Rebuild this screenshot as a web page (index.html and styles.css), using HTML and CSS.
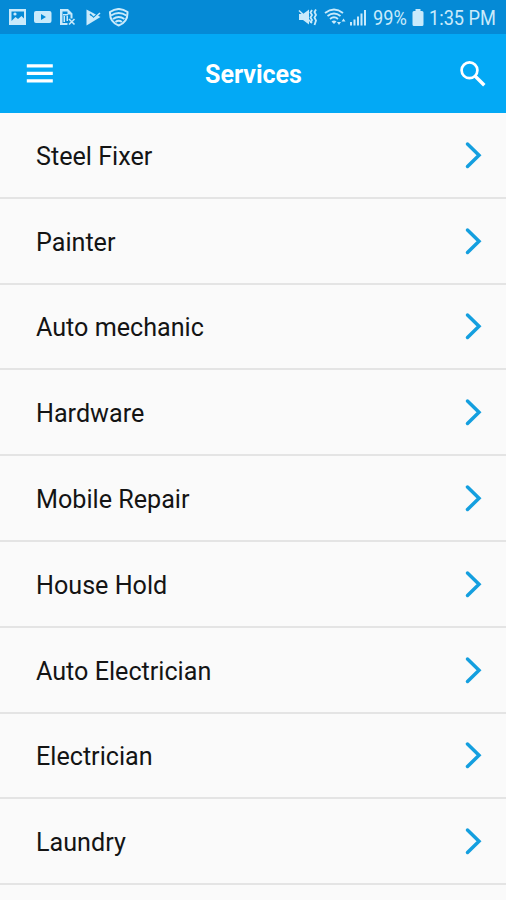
FILE: index.html
```html
<!DOCTYPE html>
<html lang="en">
<head>
    <meta charset="UTF-8">
    <meta name="viewport" content="width=device-width, initial-scale=1.0">
    <title>Services</title>
    <link rel="stylesheet" href="styles.css">
</head>
<body>
    <div class="status-bar">
        <svg class="status-left" width="124" height="20" viewBox="0 0 124 20" fill="currentColor">
            <!-- picture -->
            <path fill-rule="evenodd" d="M1 1h17v16H1zM3.500 3.500v9.500l4-4 2.500 2 3.500-3 2.500 2.500V3.500z"/>
            <circle cx="7" cy="6" r="1.600"/>
            <!-- video -->
            <path fill-rule="evenodd" d="M28 3h13.500q2 0 2 2v8q0 2-2 2H28q-2 0-2-2V5q0-2 2-2zM33 6v6l5-3z"/>
            <!-- document -->
            <path fill-rule="evenodd" d="M52 1h8l4.500 4.500v5h-2V6.500h-3V3.500h-5v11.500h5v2h-7.500z"/>
            <path d="M55 6h5v1.500h-5zM55.500 8H57v6h-1.500zM58.500 8H60v5h-1.500z"/>
            <path d="M61 11l5.500 5.500M66.500 11l-5.500 5.500" fill="none" stroke="currentColor" stroke-width="1.600"/>
            <!-- play check -->
            <path d="M78.500 1.500l14 7.500-14 8.500z"/>
            <path d="M82 6l3.500 3.500L93 3" fill="none" stroke="#058ad6" stroke-width="1.500"/>
            <path d="M83 8.500l2.500 2.500 6.500-6" fill="none" stroke="currentColor" stroke-width="1.600"/>
            <!-- secured wifi -->
            <path d="M102 4Q110.700-2 119.500 4Q120 14 110.700 17.500Q101.500 14 102 4z" fill="none" stroke="currentColor" stroke-width="2"/>
            <path d="M103 7.500q7.700-5 15.400 0M105 11q5.700-4 11.400 0M107.500 14q3.200-2.500 6.400 0" fill="none" stroke="currentColor" stroke-width="2"/>
        </svg>
        <div class="status-right">
            <svg width="72" height="20" viewBox="0 0 72 20" fill="currentColor">
                <!-- muted, vibrate -->
                <path d="M1 6h4l6-4.500v15L5 12H1z"/>
                <path d="M1 2.500l13 12.500" fill="none" stroke="currentColor" stroke-width="1.600"/>
                <path d="M14 2l-1.500 2.500L14 7l-1.500 2.500L14 12l-1.500 3M18 1.500l-1.500 2.500L18 7l-1.500 2.500L18 12.500 16.500 17" fill="none" stroke="currentColor" stroke-width="1.800"/>
                <!-- wifi -->
                <path d="M27 5q9-7 18 0M29.500 8q6.500-5 13 0M32 11q4-3.500 8 0" fill="none" stroke="currentColor" stroke-width="1.800"/>
                <path d="M33.500 13.500q2.500-2 5 0L36 16z"/>
                <path d="M39 14h4l-2 3zM43.500 13.500h4l-2-3z"/>
                <!-- signal -->
                <path d="M52 14h2v3.500h-2zM55.500 11.500h2v6h-2zM59 8.500h2v9h-2zM62.500 5.500h2v12h-2zM66 2h2v15.500h-2z"/>
            </svg>
            <span class="percent">99%</span>
            <svg class="battery" width="12" height="18" viewBox="0 0 12 18" fill="currentColor">
                <path d="M3.500 0h5v2H10q1.500 0 1.500 1.500v12Q11.500 17 10 17H2Q.5 17 .5 15.500v-12Q.5 2 2 2h1.500z"/>
            </svg>
            <span class="clock">1:35 PM</span>
        </div>
    </div>
    <header class="header">
        <svg class="menu-icon" width="28" height="20" viewBox="0 0 28 20" fill="currentColor">
            <path d="M.8 .2h26v3.300h-26zM.8 7.700h26V11h-26zM.8 15.200h26v3.300h-26z"/>
        </svg>
        <h1>Services</h1>
        <svg class="search-icon" width="26" height="26" viewBox="0 0 26 26" fill="none" stroke="currentColor">
            <circle cx="9.500" cy="9.300" r="7.900" stroke-width="2.700"/>
            <path d="M15 15l9.300 9.300" stroke-width="3.400"/>
        </svg>
    </header>
    <ul class="services">
        <li><span>Steel Fixer</span><svg class="arrow" viewBox="0 0 17 28"><path d="M2.500 3L14 14.300 2.500 25.500"/></svg></li>
        <li><span>Painter</span><svg class="arrow" viewBox="0 0 17 28"><path d="M2.500 3L14 14.300 2.500 25.500"/></svg></li>
        <li><span>Auto mechanic</span><svg class="arrow" viewBox="0 0 17 28"><path d="M2.500 3L14 14.300 2.500 25.500"/></svg></li>
        <li><span>Hardware</span><svg class="arrow" viewBox="0 0 17 28"><path d="M2.500 3L14 14.300 2.500 25.500"/></svg></li>
        <li><span>Mobile Repair</span><svg class="arrow" viewBox="0 0 17 28"><path d="M2.500 3L14 14.300 2.500 25.500"/></svg></li>
        <li><span>House Hold</span><svg class="arrow" viewBox="0 0 17 28"><path d="M2.500 3L14 14.300 2.500 25.500"/></svg></li>
        <li><span>Auto Electrician</span><svg class="arrow" viewBox="0 0 17 28"><path d="M2.500 3L14 14.300 2.500 25.500"/></svg></li>
        <li><span>Electrician</span><svg class="arrow" viewBox="0 0 17 28"><path d="M2.500 3L14 14.300 2.500 25.500"/></svg></li>
        <li><span>Laundry</span><svg class="arrow" viewBox="0 0 17 28"><path d="M2.500 3L14 14.300 2.500 25.500"/></svg></li>
    </ul>
</body>
</html>
```
FILE: styles.css
```css
body {
    margin: 0;
    height: 900px;
    overflow: hidden;
    background-color: #fafafa;
    font-family: Roboto, sans-serif;
    color: #141414;
}
.status-bar {
    display: flex;
    justify-content: space-between;
    box-sizing: border-box;
    height: 34px;
    padding: 8px 9px 0 8px;
    background-color: #058ad6;
    color: #c9eafb;
}
.status-right {
    display: flex;
    font-size: 20px;
    line-height: 20px;
    white-space: nowrap;
}
.percent, .clock {
    transform: scaleX(0.91);
    transform-origin: left;
}
.percent {
    width: 34px;
    margin-left: 3px;
}
.battery {
    margin: 1px 5px 0 5px;
}
.clock {
    width: 68px;
}
.header {
    display: flex;
    align-items: center;
    justify-content: space-between;
    box-sizing: border-box;
    height: 79px;
    padding: 0 20px 0 26px;
    background-color: #03a9f5;
    color: #fff;
}
.header h1 {
    margin: 3px 7px 0 0;
    font-size: 25px;
    line-height: 30px;
    font-weight: 700;
}
.services {
    list-style: none;
    margin: 0;
    padding: 0;
}
.services li {
    display: flex;
    align-items: center;
    justify-content: space-between;
    box-sizing: border-box;
    height: 85.8px;
    padding: 0 24px 0 36px;
    border-bottom: 2px solid #e4e4e4;
    font-size: 25.15px;
}
.services span {
    margin-top: 3px;
}
.arrow {
    width: 17px;
    height: 28px;
    fill: none;
    stroke: #149fdf;
    stroke-width: 3.5;
    stroke-linecap: round;
    stroke-linejoin: miter;
}
```
